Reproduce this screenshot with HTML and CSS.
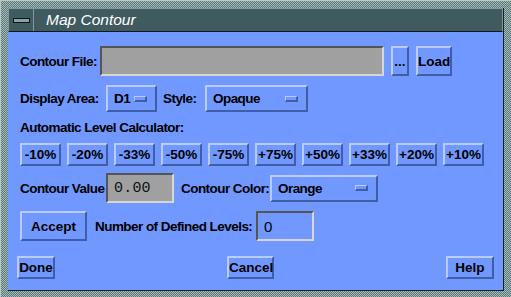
FILE: index.html
```html
<!DOCTYPE html>
<html>
  <head>
    <title>Map Contour</title>
    <link rel="stylesheet" href="styles.css">
  </head>
  <body>
    <div class="window">
      <div class="inner">
        <div class="titlebar">
          <div class="menubtn"><span class="menubar"></span></div>
          <div class="title">Map Contour</div>
        </div>
        <div class="content">
          <div class="row row1">
            <span class="label lfile">Contour File:</span>
            <span class="field file"></span>
            <button class="btn dots">...</button>
            <button class="btn load">Load</button>
          </div>
          <div class="row row2">
            <span class="label larea">Display Area:</span>
            <span class="option d1">D1<span class="ind"></span></span>
            <span class="label lstyle">Style:</span>
            <span class="option opaque">Opaque<span class="ind"></span></span>
          </div>
          <div class="row row3">
            <span class="label">Automatic Level Calculator:</span>
          </div>
          <div class="row row4">
            <button class="btn pct">-10%</button>
            <button class="btn pct">-20%</button>
            <button class="btn pct">-33%</button>
            <button class="btn pct">-50%</button>
            <button class="btn pct">-75%</button>
            <button class="btn pct">+75%</button>
            <button class="btn pct">+50%</button>
            <button class="btn pct">+33%</button>
            <button class="btn pct">+20%</button>
            <button class="btn pct">+10%</button>
          </div>
          <div class="row row5">
            <span class="label lvalue">Contour Value</span>
            <span class="field value">0.00</span>
            <span class="label lcolor">Contour Color:</span>
            <span class="option orange">Orange<span class="ind"></span></span>
          </div>
          <div class="row row6">
            <button class="btn accept">Accept</button>
            <span class="label nlevels">Number of Defined Levels:</span>
            <span class="field levels">0</span>
          </div>
          <div class="row bottom">
            <button class="btn done">Done</button>
            <button class="btn cancel">Cancel</button>
            <button class="btn help">Help</button>
          </div>
        </div>
      </div>
    </div>
  </body>
</html>
```

FILE: styles.css
```css
body {
  margin: 0;
  background: #1b2a2c;
}
/* window frame with the dotted motif border */
.window {
  width: 511px;
  height: 297px;
  box-sizing: border-box;
  padding: 7px;
  background: repeating-conic-gradient(#5b7878 0 25%, #a6baba 0 50%) 0 0 / 2px 2px;
  border-top: 1px solid #b8caca;
  border-left: 1px solid #b8caca;
}
.inner {
  height: 100%;
  display: flex;
  flex-direction: column;
  border-right: 1px solid #142022;
  border-bottom: 1px solid #142022;
}
.titlebar {
  height: 24px;
  box-sizing: border-box;
  display: flex;
  align-items: center;
  background: #3f5b60;
  border: 1px solid #7f9a9a;
  border-bottom: 1px solid #101a1c;
}
.menubtn {
  width: 24px;
  height: 100%;
  display: flex;
  align-items: center;
  justify-content: center;
  border-right: 1px solid #7f9a9a;
}
.menubar {
  width: 15px;
  height: 3px;
  border: 1px solid #0c1416;
  background: #8aa2a2;
}
.title {
  margin-left: 12px;
  color: #ffffff;
  font: italic 15.5px "Liberation Sans", Arial, sans-serif;
}
.content {
  flex: 1;
  background: #7098ff;
  padding: 14px 9px 0 12px;
  font: bold 13.5px "Liberation Sans", Arial, sans-serif;
  letter-spacing: -0.55px;
  color: #000;
}
.row {
  display: flex;
  align-items: center;
}
.row1 { height: 30px; }
.row2 { height: 27px; margin-top: 9px; }
.row3 { height: 16px; margin-top: 7px; }
.row4 { height: 23px; margin-top: 8px; gap: 6px; }
.row5 { height: 30px; margin-top: 7px; }
.row6 { height: 30px; margin-top: 8px; }
.bottom { height: 23px; margin-top: 15px; margin-left: -3px; justify-content: space-between; }

.label {
  white-space: nowrap;
  flex: none;
}
/* raised motif button */
.btn {
  flex: none;
  box-sizing: border-box;
  height: 100%;
  padding: 0;
  font: inherit;
  color: #000;
  background: #7098ff;
  border: 2px solid;
  border-color: #b9cbff #3f5ea6 #3f5ea6 #b9cbff;
}
/* sunken text field */
.field {
  flex: none;
  box-sizing: border-box;
  height: 100%;
  display: flex;
  align-items: center;
  background: #a0a0a0;
  border: 2px solid;
  border-color: #555555 #d6d6d6 #d6d6d6 #555555;
}
.lfile { width: 80px; }
.file { width: 284px; }
.dots { width: 18px; margin-left: 7px; }
.load { width: 36px; margin-left: 7px; }

.option {
  flex: none;
  box-sizing: border-box;
  height: 100%;
  display: flex;
  align-items: center;
  justify-content: space-between;
  padding: 0 8px 0 6px;
  border: 2px solid;
  border-color: #b9cbff #3f5ea6 #3f5ea6 #b9cbff;
}
.ind {
  width: 13px;
  height: 6px;
  box-sizing: border-box;
  border: 1px solid;
  border-width: 1px 2px 2px 1px;
  border-color: #b9cbff #3f5ea6 #3f5ea6 #b9cbff;
}
.larea { width: 86px; }
.d1 { width: 51px; }
.lstyle { width: 42px; margin-left: 6px; }
.opaque { width: 103px; }
.pct { width: 41px; }

.lvalue { width: 86px; }
.value {
  width: 68px;
  padding-left: 6px;
  font: 15px "Liberation Mono", monospace;
  letter-spacing: 0.2px;
  color: #101010;
}
.lcolor { width: 89px; margin-left: 7px; }
.orange { width: 108px; height: 27px; }

.accept { width: 67px; }
.nlevels { width: 161px; margin-left: 8px; }
.levels {
  width: 58px;
  padding-left: 6px;
  background: #7098ff;
  font: 15px "Liberation Sans", sans-serif;
}
.done { width: 38px; }
.cancel { width: 47px; }
.help { width: 48px; }
```
